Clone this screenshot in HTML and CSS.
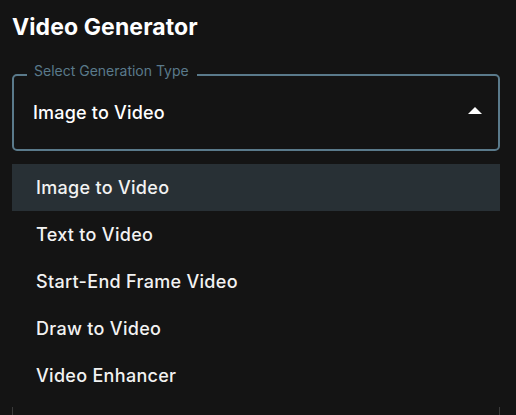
FILE: index.html
```html
<!DOCTYPE html>
<html lang="en">
<head>
<meta charset="utf-8">
<title>Video Generator</title>
<link rel="stylesheet" href="styles.css">
</head>
<body>
<main class="panel">
  <h1 class="title">Video Generator</h1>
  <div class="select">
    <span class="select-label">Select Generation Type</span>
    <span class="select-value">Image to Video</span>
    <svg class="select-arrow" width="14" height="7" viewBox="0 0 14 7" aria-hidden="true"><path d="M0 7 L7 0 L14 7 Z" fill="#ffffff"/></svg>
  </div>
  <ul class="menu">
    <li class="menu-item active">Image to Video</li>
    <li class="menu-item">Text to Video</li>
    <li class="menu-item">Start-End Frame Video</li>
    <li class="menu-item">Draw to Video</li>
    <li class="menu-item">Video Enhancer</li>
  </ul>
  <div class="below"></div>
</main>
</body>
</html>
```

FILE: styles.css
```css
* { box-sizing: border-box; }
html, body {
  margin: 0;
  padding: 0;
  background: #141414;
  height: 100%;
  overflow: hidden;
}
body {
  font-family: Inter, "Noto Sans", sans-serif;
  color: #f2f2f2;
}
.panel {
  padding: 13px 16px 0 12px;
  display: flex;
  flex-direction: column;
}
.title {
  margin: 0;
  font-size: 23px;
  line-height: 28px;
  font-weight: 700;
  color: #ffffff;
  letter-spacing: 0.1px;
}
.select {
  position: relative;
  margin-top: 33px;
  height: 77px;
  border: 2px solid #5a7a8b;
  border-radius: 5px;
  display: flex;
  align-items: center;
  justify-content: space-between;
  padding: 0 16px 0 19px;
}
.select-label {
  position: absolute;
  top: -13px;
  left: 13px;
  padding: 0 8px 0 7px;
  background: #141414;
  font-size: 14px;
  line-height: 16px;
  color: #5a7a8b;
}
.select-value {
  font-size: 18px;
  font-weight: 500;
  color: #ffffff;
  letter-spacing: 0.2px;
}
.select-arrow { display: block; margin-top: -4px; }
.menu {
  list-style: none;
  margin: 13px 0 0;
  padding: 0;
}
.menu-item {
  height: 47px;
  display: flex;
  align-items: center;
  padding-left: 24px;
  font-size: 18px;
  font-weight: 500;
  color: #f2f2f2;
  letter-spacing: 0.3px;
}
.menu-item.active { background: #283035; }
.below {
  margin-top: 8px;
  height: 20px;
  border-left: 1px solid #3a3a3a;
  border-right: 1px solid #3a3a3a;
}
```
